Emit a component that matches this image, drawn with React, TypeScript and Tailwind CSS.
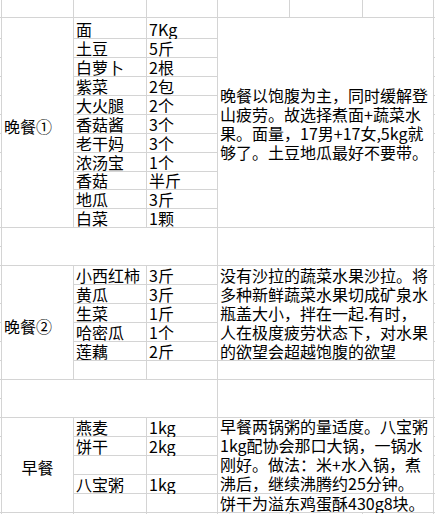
import React from "react";

type Item = [string, string];

const dinnerOne: Item[] = [
  ["面", "7Kg"],
  ["土豆", "5斤"],
  ["白萝卜", "2根"],
  ["紫菜", "2包"],
  ["大火腿", "2个"],
  ["香菇酱", "3个"],
  ["老干妈", "3个"],
  ["浓汤宝", "1个"],
  ["香菇", "半斤"],
  ["地瓜", "3斤"],
  ["白菜", "1颗"],
];

const dinnerTwo: Item[] = [
  ["小西红柿", "3斤"],
  ["黄瓜", "3斤"],
  ["生菜", "1斤"],
  ["哈密瓜", "1个"],
  ["莲藕", "2斤"],
  ["", ""],
];

const breakfast: Item[] = [
  ["燕麦", "1kg"],
  ["饼干", "2kg"],
  ["", ""],
  ["八宝粥", "1kg"],
  ["", ""],
];

const noteOne = [
  "晚餐以饱腹为主，同时缓解登",
  "山疲劳。故选择煮面+蔬菜水",
  "果。面量，17男+17女,5kg就",
  "够了。土豆地瓜最好不要带。",
];

const noteTwo = [
  "没有沙拉的蔬菜水果沙拉。将",
  "多种新鲜蔬菜水果切成矿泉水",
  "瓶盖大小，拌在一起.有时，",
  "人在极度疲劳状态下，对水果",
  "的欲望会超越饱腹的欲望",
];

const noteThree = [
  "早餐两锅粥的量适度。八宝粥",
  "1kg配协会那口大锅，一锅水",
  "刚好。做法：米+水入锅，煮",
  "沸后，继续沸腾约25分钟。",
];

function Blank({ className = "" }: { className?: string }) {
  return <div className={"bg-white " + className} />;
}

function Cell({ text }: { text: string }) {
  return (
    <div className="flex items-end whitespace-nowrap bg-white pl-[2px] leading-[17px]">
      {text}
    </div>
  );
}

function Note({ lines, className = "" }: { lines: string[]; className?: string }) {
  return (
    <div className={"flex flex-col bg-white pl-[2px] leading-[19px] whitespace-nowrap " + className}>
      {lines.map((l, i) => (
        <div key={i}>{l}</div>
      ))}
    </div>
  );
}

export default function App() {
  const rows: React.ReactNode[] = [];
  let k = 0;
  const push = (n: React.ReactElement) => rows.push(React.cloneElement(n, { key: k++ }));

  // top row, partly cut off
  for (let i = 0; i < 8; i++) push(<Blank />);

  // 晚餐①
  dinnerOne.forEach(([name, qty], i) => {
    push(<Blank />);
    if (i === 0)
      push(
        <div className="row-span-11 flex items-center bg-white pl-[2px] pt-[6px]">晚餐①</div>
      );
    push(<Cell text={name} />);
    push(<Cell text={qty} />);
    if (i === 0)
      push(<Note lines={noteOne} className="col-span-3 row-span-11 justify-center pt-[2px]" />);
    push(<Blank />);
  });

  // two empty rows
  push(<Blank />);
  push(<Blank className="col-span-3 row-span-2" />);
  push(<Blank className="col-span-3 row-span-2" />);
  push(<Blank />);
  push(<Blank />);
  push(<Blank />);

  // 晚餐②
  dinnerTwo.forEach(([name, qty], i) => {
    push(<Blank />);
    if (i === 0)
      push(
        <div className="row-span-6 flex items-center bg-white pl-[2px] pt-[6px]">晚餐②</div>
      );
    push(<Cell text={name} />);
    push(<Cell text={qty} />);
    if (i === 0) push(<Note lines={noteTwo} className="col-span-3 row-span-5 justify-start" />);
    if (i === 5) push(<Blank className="col-span-3" />);
    push(<Blank />);
  });

  // two empty rows
  push(<Blank />);
  push(<Blank className="col-span-3 row-span-2" />);
  push(<Blank className="col-span-3 row-span-2" />);
  push(<Blank />);
  push(<Blank />);
  push(<Blank />);

  // 早餐
  breakfast.forEach(([name, qty], i) => {
    push(<Blank />);
    if (i === 0)
      push(
        <div className="row-span-5 flex items-center justify-center bg-white pt-[4px]">早餐</div>
      );
    push(<Cell text={name} />);
    push(<Cell text={qty} />);
    if (i === 0) push(<Note lines={noteThree} className="col-span-3 row-span-4 justify-end" />);
    if (i === 4)
      push(
        <div className="col-span-3 flex items-end whitespace-nowrap bg-white pl-[2px] leading-[17px]">
          饼干为溢东鸡蛋酥430g8块。
        </div>
      );
    push(<Blank />);
  });

  // bottom row, cut off
  for (let i = 0; i < 8; i++) push(<Blank />);

  return (
    <div className="h-[514px] w-[435px] overflow-hidden bg-white">
      <div className="grid grid-cols-[1px_71px_72px_70px_71px_72px_70px_20px] grid-rows-[17px_20px_repeat(7,18px)_17px_repeat(17,18px)_20px] gap-px bg-[#d4d4d4] font-['Noto_Sans_CJK_SC',sans-serif] text-[16px] text-black">
        {rows}
      </div>
    </div>
  );
}
